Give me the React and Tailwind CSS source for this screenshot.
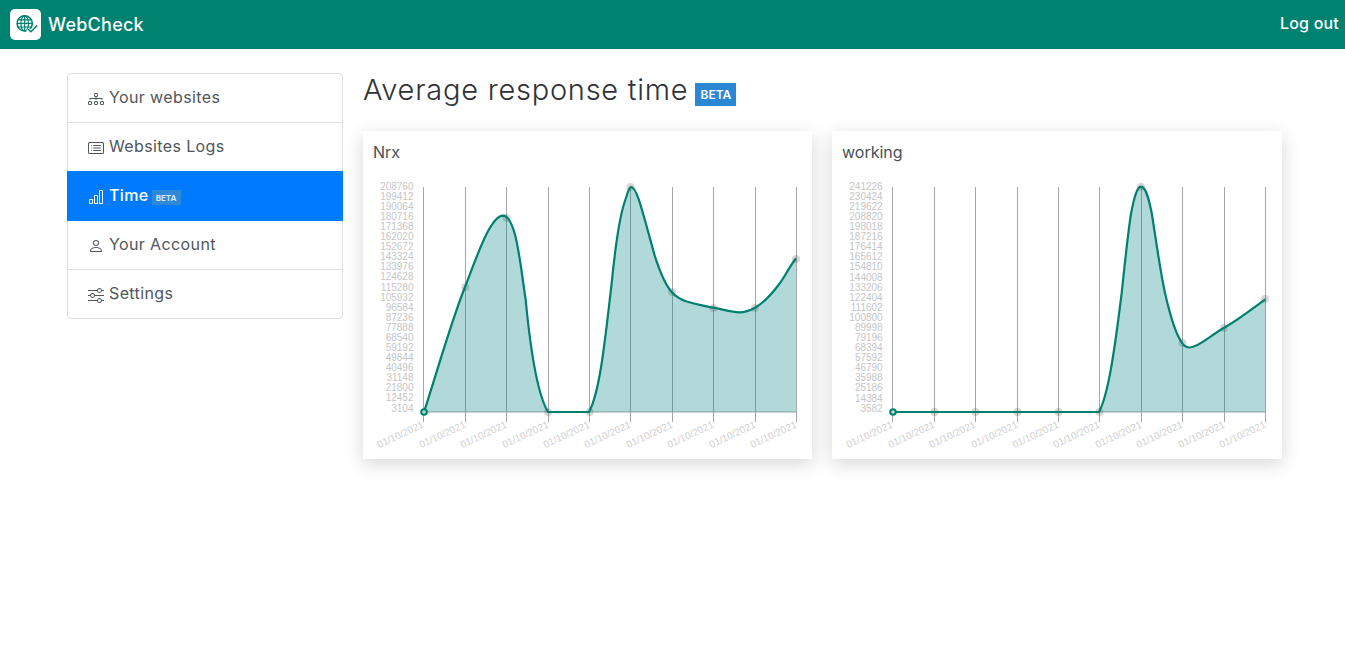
import React from "react";
import { BsDiagram3, BsCardList, BsBarChart, BsPerson, BsSliders } from "react-icons/bs";

const sans = "font-['Inter','Open_Sans',sans-serif]";

const chartOne = {
  title: "Nrx",
  left: 363,
  width: 449,
  labelX: 413.5,
  grid: [423.5, 465.5, 506.5, 548.5, 589.5, 630.5, 672.5, 713.5, 755.5, 796.5],
  dots: [[465.5, 287], [506.5, 218], [548, 412], [589.5, 412], [630.5, 187], [672, 292], [713.5, 308], [755, 308], [796, 259]],
  labels: [
    ["208760", 186.7], ["199412", 196.7], ["190064", 206.7], ["180716", 216.7], ["171368", 226.7], ["162020", 236.7],
    ["152672", 246.7], ["143324", 256.7], ["133976", 266.7], ["124628", 276.7], ["115280", 287.3], ["105932", 297.3],
    ["96584", 307.3], ["87236", 317.3], ["77888", 327.3], ["68540", 337.3], ["59192", 347.3], ["49844", 357.3],
    ["40496", 367.3], ["31148", 377.3], ["21800", 387.3], ["12452", 397.3], ["3104", 408.3],
  ],
  x0: 424,
  x1: 796,
  line:
    "M424 412 C437 372 451 322 465 287 C476 259 490 216 503 215.7 C516 216 520 262 525.7 300 C530 345 536 392 548 412 L589 412 C600 392 605 340 611.7 283 C615 250 619 220 624 204 C627 195 629 187 631 187 C637 187 642 210 655 256.7 C660 272 665 285 672 292.3 C680 302 695 304 713.3 307.7 C725 310 733 312.3 739.3 312.3 C746 312.3 751 310 755 307.7 C765 302 772 294 780 283 C785 276 790 266 796 258.3",
};

const chartTwo = {
  title: "working",
  left: 832,
  width: 450,
  labelX: 882.7,
  grid: [892.5, 934.5, 975.5, 1017.5, 1058.5, 1099.5, 1141.5, 1182.5, 1224.5, 1265.5],
  dots: [[934.5, 412], [975.5, 412], [1017.5, 412], [1058.5, 412], [1099.5, 412], [1141, 187], [1182.5, 343], [1224, 328], [1265, 299]],
  labels: [
    ["241226", 186.7], ["230424", 196.7], ["219622", 206.7], ["208820", 216.7], ["198018", 226.7], ["187216", 236.7],
    ["176414", 246.7], ["165612", 256.7], ["154810", 266.7], ["144008", 277.3], ["133206", 287.3], ["122404", 297.3],
    ["111602", 307.3], ["100800", 317.3], ["89998", 327.3], ["79196", 337.3], ["68394", 347.3], ["57592", 357.3],
    ["46790", 367.3], ["35988", 377.3], ["25186", 387.3], ["14384", 398.3], ["3582", 408.3],
  ],
  x0: 893,
  x1: 1265.3,
  line:
    "M893 412 L1099 412 C1108 395 1114 355 1121.7 293 C1125 262 1128 232 1131 214 C1134 198 1137 186.7 1141 186.7 C1146 186.7 1149 200 1151.7 213 C1156 240 1160 270 1165 293 C1170 315 1176 335 1182.3 343.3 C1185 347 1187 347.5 1190 347.5 C1198 347.5 1210 336 1223.3 328.3 C1238 320 1252 309 1265.3 299.3",
};

function Chart({ data }) {
  const { left, width, grid, labels, line, dots, labelX, x0, x1 } = data;
  return (
    <svg className="block" width={width} height={289} viewBox={`${left} 170 ${width} 289`}>
      {grid.map((x) => (
        <line key={x} x1={x} x2={x} y1="187" y2="422" stroke="#a6a6a6" strokeWidth="1" />
      ))}
      <line x1={grid[0]} x2={grid[9]} y1="412" y2="412" stroke="#a6a6a6" strokeWidth="1" />
      {labels.map(([t, y]) => (
        <text key={t} x={labelX} y={y + 3.6} textAnchor="end" fontSize="10" fill="#c6c6c6" fontFamily="'Liberation Sans', sans-serif">
          {t}
        </text>
      ))}
      {grid.map((x, i) => (
        <text
          key={i}
          textAnchor="end"
          fontSize="10"
          fill="#d0d0d0"
          fontFamily="'Liberation Sans', sans-serif"
          transform={`translate(${x + 1} 427) rotate(-25)`}
        >
          01/10/2021
        </text>
      ))}
      <path d={`${line} L${x1} 412 L${x0} 412 Z`} fill="rgba(0,128,128,0.3)" />
      {dots.map(([x, y], i) => (
        <circle key={i} cx={x} cy={y} r="4" fill="rgba(90,90,90,0.25)" />
      ))}
      <path d={line} fill="none" stroke="#00806f" strokeWidth="2.2" strokeLinejoin="round" />
      <circle cx={x0} cy="412" r="2.8" fill="#b9dcd8" stroke="#00806f" strokeWidth="2" />
    </svg>
  );
}

function Card({ data }) {
  return (
    <div className={`bg-white shadow-[0_5px_18px_rgba(0,0,0,0.16)] ${data === chartOne ? "w-[449px]" : "w-[450px]"}`}>
      <div className="h-[39px] pl-[10px] pt-[9px] text-[16px] leading-[24px] text-[#4a4f55]">{data.title}</div>
      <Chart data={data} />
    </div>
  );
}

function Logo() {
  return (
    <div className="flex h-[31px] w-[31px] items-center justify-center rounded-[5px] bg-white">
      <svg width="31" height="31" viewBox="0 0 31 31" fill="none" stroke="#00806f">
        <circle cx="14.7" cy="14.4" r="7.6" strokeWidth="1.6" />
        <ellipse cx="14.7" cy="14.4" rx="3.8" ry="7.6" strokeWidth="1.2" />
        <path d="M14.7 6.8v15.2M7.2 14.4h15M8.2 10.8h13M8.2 18h13" strokeWidth="1.2" />
        <path d="M17.4 20.2l3.4 3 6.9-6.9" strokeWidth="3.6" stroke="#ffffff" />
        <path d="M18 20.2l2.9 2.6 6.3-6.3" strokeWidth="1.5" />
      </svg>
    </div>
  );
}

const items = [
  { label: "Your websites", Icon: BsDiagram3, box: "h-[49px] border-b border-[#dfdfdf] text-[#50565c]" },
  { label: "Websites Logs", Icon: BsCardList, box: "h-[48px] text-[#50565c]" },
  { label: "Time", Icon: BsBarChart, active: true, box: "mx-[-1px] h-[50px] bg-[#007bff] font-medium text-white" },
  { label: "Your Account", Icon: BsPerson, box: "h-[49px] border-b border-[#dfdfdf] text-[#50565c]" },
  { label: "Settings", Icon: BsSliders, box: "h-[48px] text-[#50565c]" },
];

export default function App() {
  return (
    <div className={`${sans} min-h-[652px] bg-white`}>
      <header className="flex h-[49px] items-center justify-between bg-[#008270] pl-[10px] pr-[6px] text-white">
        <div className="flex items-center gap-[7px]">
          <Logo />
          <span className="pb-[1px] text-[18px] font-medium tracking-[0.25px]">WebCheck</span>
        </div>
        <span className="pb-[3px] text-[16px] font-medium tracking-[0.2px]">Log out</span>
      </header>
      <main className="flex items-start pl-[67px] pt-[24px]">
        <nav className="w-[276px] rounded-[4px] border border-[#dfdfdf]">
          {items.map(({ label, Icon, active, box }) => (
            <div key={label} className={`flex items-center gap-[5px] pb-[2px] pl-[20px] text-[16px] tracking-[0.38px] ${box} ${active ? "pl-[21px]" : ""}`}>
              <Icon className="h-[16px] w-[16px] shrink-0 translate-y-[2px]" />
              <span>{label}</span>
              {active && (
                <span className="ml-[-2px] mt-[5px] flex h-[15px] w-[29px] items-center justify-center bg-[#2e89d6] text-[8px] font-bold tracking-normal text-[#d5e7f7]">
                  BETA
                </span>
              )}
            </div>
          ))}
        </nav>
        <section className="ml-[20px]">
          <div className="flex h-[58px] items-start">
            <h1 className="text-[29px] font-light leading-[34px] tracking-[0.75px] text-[#2f3337]">Average response time</h1>
            <span className="ml-[7px] mt-[10px] flex h-[23px] w-[41px] items-center justify-center bg-[#2b87d3] text-[12px] font-semibold text-white">
              BETA
            </span>
          </div>
          <div className="flex gap-[20px]">
            <Card data={chartOne} />
            <Card data={chartTwo} />
          </div>
        </section>
      </main>
    </div>
  );
}
